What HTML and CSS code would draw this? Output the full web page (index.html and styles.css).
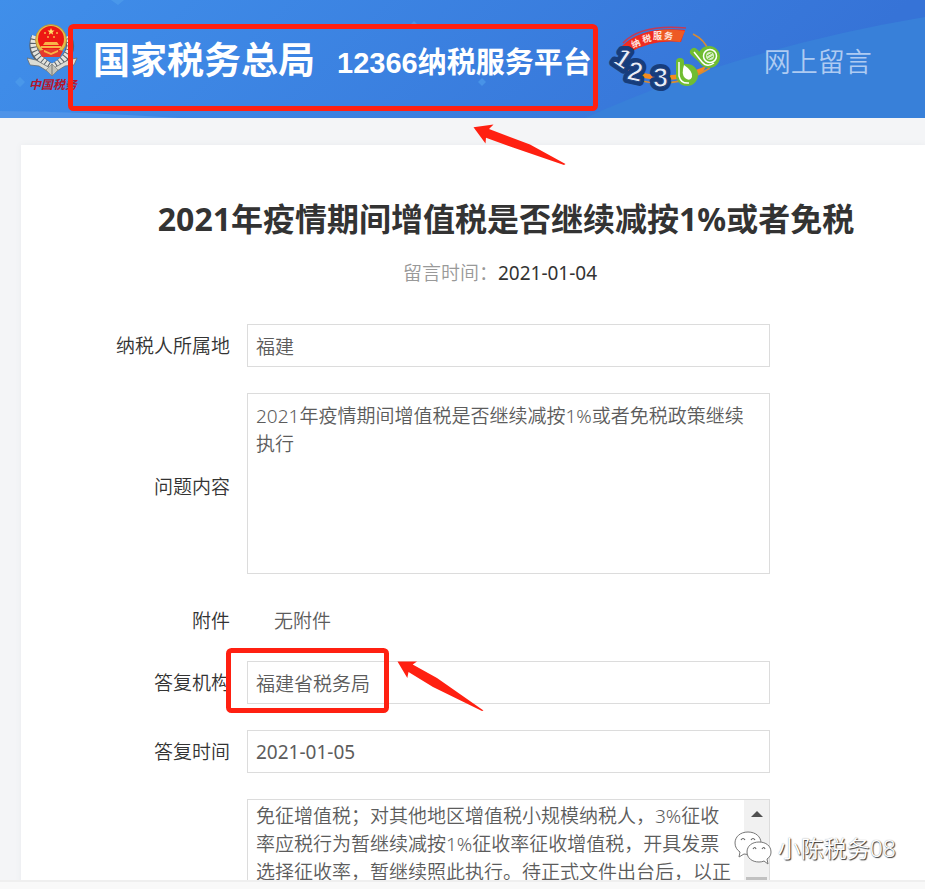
FILE: index.html
```html
<!DOCTYPE html>
<html lang="zh-CN">
<head>
<meta charset="utf-8">
<meta name="viewport" content="width=device-width, initial-scale=1">
<title>国家税务总局 12366纳税服务平台</title>
<link rel="stylesheet" href="styles.css">
</head>
<body>
<header class="banner">
  <svg class="banner-art" viewBox="0 0 925 118" preserveAspectRatio="none" aria-hidden="true">
    <defs>
      <linearGradient id="sky" gradientUnits="userSpaceOnUse" x1="180" y1="-180" x2="620" y2="280">
        <stop offset="0" stop-color="#408fea"/>
        <stop offset="1" stop-color="#3673d7"/>
      </linearGradient>
    </defs>
    <rect width="925" height="118" fill="url(#sky)"/>
    <path d="M585 118Q740 48 925 17V118Z" fill="#3880d9"/>
    <path d="M0 111Q90 112 180 118H0Z" fill="#5094e8"/>
    <path d="M111 0h13l-6 5zM20 77l5 5-5 5-5-5zM414 21l4 4-4 4-4-4zM482 78l4 4-4 4-4-4z" fill="#4f9deb" opacity=".7"/>
  </svg>
  <svg class="emblem" viewBox="0 0 52 72" role="img" aria-label="中国税务">
    <g fill="none" stroke="#58606a" stroke-width="8">
      <path d="M8 14Q1 32 25 45Q49 32 41 14"/>
    </g>
    <g fill="none" stroke="#e4e4de" stroke-width="6">
      <path d="M8 13Q1 31 25 44Q49 31 41 13" stroke-dasharray="3 1"/>
    </g>
    <path d="M0 35l9 2 16 9 16-9 9-2-3 7-9 1-13 8-13-8-9-1z" fill="#dcdcd4" stroke="#666c70" stroke-width=".8"/>
    <path d="M25 41v12l-6-6zM25 41v12l6-6z" fill="#c4c3b9" stroke="#777a77" stroke-width=".6"/>
    <circle cx="24" cy="17" r="15.5" fill="#e3bd4d" stroke="#b48a2e" stroke-width=".7"/>
    <circle cx="24" cy="16" r="13" fill="#ed1713"/>
    <path d="M12 28q12-5 24 0l-3 6H15z" fill="#e6392d"/>
    <path d="M24 5l1 2.500h2.500l-2 1.700.7 2.500-2.200-1.500-2.200 1.500.7-2.500-2-1.700H23z" fill="#ffe36a"/>
    <g fill="#f9b348"><circle cx="18" cy="10" r="1"/><circle cx="30" cy="10" r="1"/><circle cx="21" cy="14" r="1"/><circle cx="27" cy="14" r="1"/>
    <path d="M18 19h12l2 3H16zM14 23h20v2H14zM17 27l7 3 7-3v2l-7 3-7-3z"/></g>
    <text class="emblem-text" x="2" y="66">中国税务</text>
  </svg>
  <div class="brand">
    <span class="agency">国家税务总局</span>
    <span class="platform">12366纳税服务平台</span>
  </div>
  <svg class="hotline" viewBox="0 0 112 68" role="img" aria-label="12366">
    <path d="M14 18Q32-1 77 3" fill="none" stroke="#c43a55" stroke-width="1.500"/>
    <path d="M13 21Q33 1 76 5l-4 12Q42 14 20 28q-3 7 4 14l-5 3Q6 34 13 21z" fill="#f02c20"/>
    <path d="M50 5q13-1 26 1l-5 11q-12-2-22-1z" fill="#ee5a24"/>
    <path d="M14 33l8-3q-3 6 4 13l-6 4Q11 41 14 33z" fill="#f4632b"/>
    <path d="M30 47Q64 56 97 41l-3 6Q65 60 29 52z" fill="#f68b1f"/>
    <path d="M33 56Q68 64 101 43M84 9Q96 15 99 25" fill="none" stroke="#d98b32" stroke-width="1.500"/>
    <g class="hotline-text">
      <text x="22" y="22" transform="rotate(-24 26 18)">纳</text>
      <text x="33" y="17" transform="rotate(-12 37 13)">税</text>
      <text x="44" y="14">服</text>
      <text x="55" y="14" transform="rotate(5 59 11)">务</text>
    </g>
    <g class="digits-back">
      <text x="7" y="41" transform="rotate(34 12 32)">1</text>
      <text x="19" y="56" transform="rotate(12 28 46)">2</text>
      <text x="44" y="62">3</text>
    </g>
    <g class="digits-front">
      <text x="7" y="41" transform="rotate(34 12 32)">1</text>
      <text x="19" y="56" transform="rotate(12 28 46)">2</text>
      <text x="44" y="62">3</text>
    </g>
    <g fill="none" stroke="#70bd31" stroke-linecap="round">
      <path d="M71 37v14" stroke-width="8"/><circle cx="78" cy="50" r="7" stroke-width="8"/>
      <path d="M85 27l10 9" stroke-width="8"/><circle cx="100" cy="32" r="6" stroke-width="10"/>
    </g>
    <circle cx="78" cy="50" r="6" fill="#70bd31"/>
    <path d="M70 37v14q2 8 10 7M85 27l8 10q5 6 12 1" fill="none" stroke="#fff" stroke-width="1.500"/>
    <path d="M75 40q9 6 8 12-2 5-7 1-4-4-1-13z" fill="#fff"/>
    <circle cx="101" cy="31" r="6.500" fill="#70bd31" stroke="#fff" stroke-width="1.500"/>
    <circle cx="101" cy="31" r="4" fill="#d4eec2"/>
    <path d="M98 31l5-3M99 34l5-3" stroke="#70bd31"/>
  </svg>
  <span class="section">网上留言</span>
</header>

<main class="page">
  <article class="panel">
    <div class="heading">
      <h1>2021年疫情期间增值税是否继续减按1%或者免税</h1>
      <p class="meta">留言时间：<time datetime="2021-01-04">2021-01-04</time></p>
    </div>
    <form class="form">
      <label for="region">纳税人所属地</label>
      <input id="region" class="field" type="text" value="福建" readonly>

      <label class="low-label" for="question">问题内容</label>
      <textarea id="question" class="field question" readonly>2021年疫情期间增值税是否继续减按1%或者免税政策继续执行</textarea>

      <label class="low-label" for="attachment">附件</label>
      <output id="attachment" class="attachment">无附件</output>

      <label for="office">答复机构</label>
      <input id="office" class="field" type="text" value="福建省税务局" readonly>

      <label for="reply-date">答复时间</label>
      <input id="reply-date" class="field date" type="text" value="2021-01-05" readonly>

      <span></span>
      <div class="reply">
        <textarea class="reply-text" aria-label="答复内容" readonly>免征增值税；对其他地区增值税小规模纳税人，3%征收率应税行为暂继续减按1%征收率征收增值税，开具发票选择征收率，暂继续照此执行。待正式文件出台后，以正</textarea>
        <div class="scrollbar" aria-hidden="true">
          <svg viewBox="0 0 12 7"><path d="M0 7L6 1l6 6z" fill="#505050"/></svg>
          <div class="thumb"></div>
        </div>
      </div>
    </form>
  </article>
</main>
<footer class="bottom"></footer>

<svg class="marks" viewBox="0 0 925 889" aria-hidden="true">
  <g fill="none" stroke="#ff2011" stroke-width="5">
    <rect x="70.500" y="26.500" width="525" height="82" rx="3"/>
    <rect x="228.500" y="650.500" width="158" height="60" rx="3"/>
  </g>
  <g fill="#ff2011">
    <path d="M473.500 127.300L493.500 124.500 489 129 530 144.500 565.500 164 564 165 513 147.500 486 137.700 485.500 143.500Z"/>
    <path d="M397.500 661.500H417L412.700 664.500 437 678 483.500 710.500 482 711 433 687 408.500 672 407.300 678Z"/>
  </g>
</svg>

<div class="watermark">
  <svg viewBox="0 0 38 34" aria-hidden="true">
    <g fill="#fff" stroke="#777" stroke-width="1">
      <path d="M14 1C6 1 1 6 1 12c0 4 2 7 5 9l-1 5 5-3q4 1 8 0c6-1 9-5 9-11S22 1 14 1z"/>
      <path d="M25 11c-7 0-12 4-12 10s5 10 12 10q3 0 5-1l4 3-1-5c3-2 4-4 4-7 0-6-5-10-12-10z"/>
    </g>
    <path d="M7 9q2-3 4 0M17 9q2-3 4 0M19 18q2-3 3 0M28 18q2-3 3 0" fill="none" stroke="#666" stroke-width="1.200"/>
  </svg>
  <span>小陈税务08</span>
</div>
</body>
</html>
```
FILE: styles.css
```css
* {
  box-sizing: border-box;
}

body {
  margin: 0;
  position: relative;
  height: 100vh;
  overflow: hidden;
  display: flex;
  flex-direction: column;
  background: #f4f5f7;
  color: #333;
  font-family: "Noto Sans", "Noto Sans CJK SC", sans-serif;
  font-size: 19px;
  font-weight: 350;
  line-height: 28px;
}

.banner {
  position: relative;
  flex: none;
  display: flex;
  align-items: center;
  height: 118px;
  padding-left: 27px;
  white-space: nowrap;
}

.banner-art {
  position: absolute;
  inset: 0;
  width: 100%;
  height: 100%;
}

.emblem,
.brand,
.hotline,
.section {
  position: relative;
  flex: none;
}

.emblem {
  width: 52px;
  height: 72px;
}

.emblem-text {
  fill: #b5142c;
  font: italic bold 12px "Noto Sans CJK SC", sans-serif;
}

.brand {
  display: flex;
  align-items: center;
  gap: 22px;
  margin-left: 14px;
  padding-top: 5px;
  color: #fff;
  font-family: "Liberation Sans", "Noto Sans CJK SC", sans-serif;
  font-weight: 700;
  line-height: 40px;
}

.agency {
  font-size: 37px;
}

.platform {
  padding-top: 2px;
  font-size: 29px;
}

.hotline {
  width: 112px;
  height: 68px;
  margin-left: 17px;
  overflow: visible;
}

.hotline-text {
  fill: #ffe5df;
  font: bold 9px "Noto Sans CJK SC", sans-serif;
}

.digits-back,
.digits-front {
  font: bold 27px "Liberation Sans", sans-serif;
}

.digits-back {
  fill: #173d7c;
  stroke: #173d7c;
  stroke-width: 8px;
  stroke-linejoin: round;
}

.digits-front {
  fill: #e9eef8;
  stroke: #173d7c;
  stroke-width: 1px;
}

.section {
  margin-left: 43px;
  padding-top: 5px;
  color: #aecbf2;
  font-size: 27px;
  line-height: 40px;
}

.page {
  flex: 1;
  min-height: 0;
  overflow: hidden;
  padding: 27px 0 0 21px;
}

.panel {
  min-height: 100%;
  padding: 50px 0 26px;
  background: #fff;
  box-shadow: 0 0 6px #e9ebee;
}

.heading {
  padding-left: 66px;
  text-align: center;
}

h1 {
  margin: 0;
  font-size: 32px;
  font-weight: 700;
  line-height: 48px;
}

.meta {
  margin: 16px 12px 37px 0;
  color: #999;
}

.meta time {
  color: #333;
  font-weight: 400;
}

.form {
  display: grid;
  grid-template-columns: 209px 1fr;
  align-items: center;
  gap: 26px 17px;
  padding-right: 155px;
}

label {
  text-align: right;
}

.field,
.reply-text {
  display: block;
  width: 100%;
  margin: 0;
  border: 1px solid #dcdcdc;
  border-radius: 0;
  background: #fff;
  color: #5c5c5c;
  font: inherit;
  outline: none;
  resize: none;
}

.field {
  height: 43px;
  padding: 0 8px;
}

.date {
  font-weight: 400;
}

.question {
  height: 181px;
  padding: 8px;
  overflow: hidden;
}

.low-label,
.attachment {
  padding-top: 7px;
}

.attachment {
  padding-left: 27px;
  color: #5c5c5c;
}

.reply {
  display: flex;
  height: 181px;
  border: 1px solid #dcdcdc;
}

.reply-text {
  flex: 1;
  min-width: 0;
  padding: 2px 8px;
  border: 0;
  overflow: hidden;
}

.scrollbar {
  flex: none;
  width: 25px;
  padding: 10px 2px 0;
  background: #f1f1f1;
}

.scrollbar svg {
  display: block;
  width: 12px;
  height: 7px;
  margin: 0 auto 60px;
}

.thumb {
  width: 21px;
  height: 60px;
  background: #c1c1c1;
}

.bottom {
  position: relative;
  flex: none;
  height: 9px;
  border-top: 2px solid #efefef;
  background: #f9f9f9;
}

.marks {
  position: absolute;
  top: 0;
  left: 0;
  width: 925px;
  height: 889px;
  pointer-events: none;
}

.watermark {
  position: absolute;
  right: 29px;
  bottom: 24px;
  display: flex;
  align-items: center;
  gap: 6px;
  color: #fff;
  font-size: 23px;
  line-height: 34px;
  text-shadow: 1px 1px 1px #333, 0 0 1px #999;
}

.watermark svg {
  width: 38px;
  height: 34px;
}
```
